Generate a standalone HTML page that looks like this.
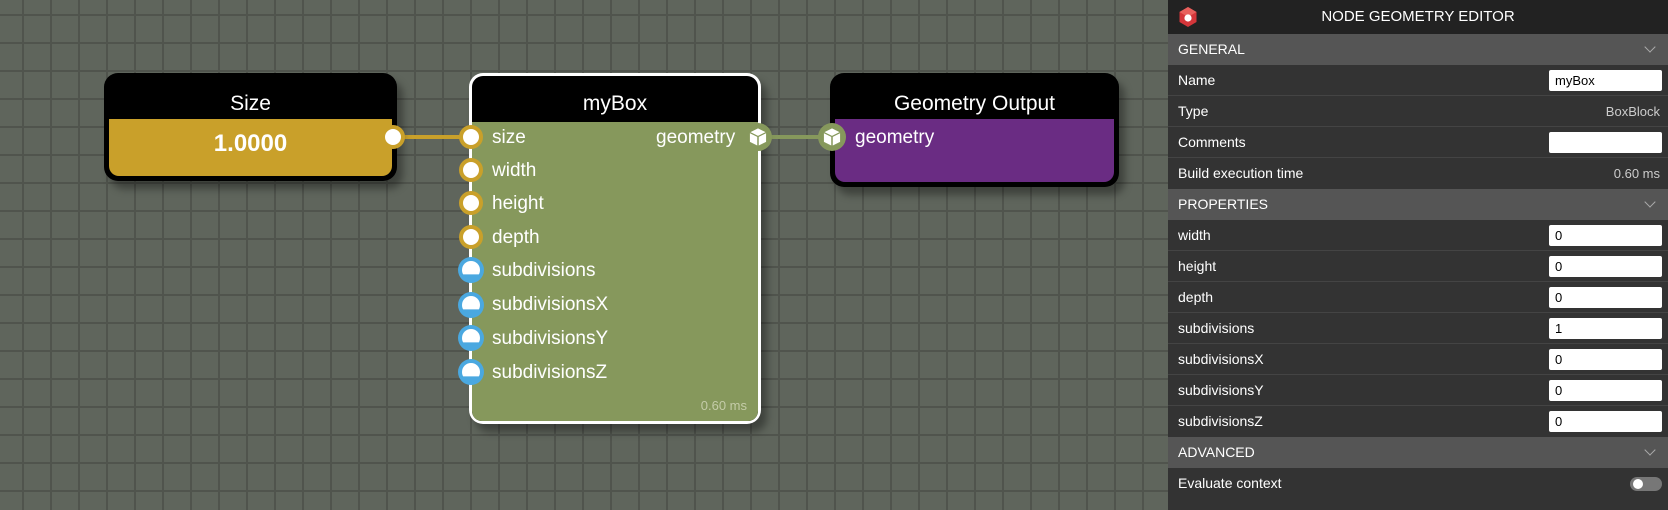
<!DOCTYPE html>
<html><head><meta charset="utf-8"><style>
*{box-sizing:border-box;margin:0;padding:0}
body{width:1668px;height:510px;overflow:hidden;position:relative;font-family:"Liberation Sans",Arial,sans-serif;
background-color:#5f655c;
background-image:linear-gradient(90deg,#50544d 2px,transparent 2px),linear-gradient(0deg,#50544d 2px,transparent 2px);
background-size:28px 28px;background-position:22px 16px;}
.node{position:absolute;border-radius:14px;background:#000;box-shadow:6px 8px 8px rgba(0,0,0,.35)}
.title{position:absolute;left:0;right:0;top:0;height:46px;line-height:56px;text-align:center;color:#fff;font-size:21px}
.t2{line-height:62px}
.body{position:absolute;left:5px;right:5px;top:46px;bottom:5px;border-radius:0 0 10px 10px}
.lbl{position:absolute;color:#fff;font-size:19px;line-height:20px}
.port{position:absolute;width:24px;height:24px;border-radius:50%;background:#fff;border:4px solid #c9a02a}
.bport{position:absolute;width:26px;height:26px;border-radius:50%;background:#4aa8e0;overflow:hidden}
.bport:after{content:"";position:absolute;left:4px;top:4px;width:18px;height:18px;border-radius:50%;background:#fff;clip-path:inset(0 0 26% 0)}
.link{position:absolute;height:4px}
.panel{position:absolute;left:1168px;top:0;width:500px;height:510px;background:#333}
.ph{height:34px;background:#222;color:#fff;text-align:center;line-height:34px;font-size:15px;position:relative}
.sec{height:31px;background:#555;color:#fff;font-size:14px;line-height:31px;padding-left:10px;position:relative}
.sec:after{content:"";position:absolute;right:14px;top:9px;width:7px;height:7px;border-right:1.5px solid #aaa;border-bottom:1.5px solid #aaa;transform:rotate(45deg)}
.row{height:31px;color:#fff;font-size:14px;line-height:31px;padding-left:10px;position:relative;border-bottom:1px solid #444}
.row .v{position:absolute;right:8px;top:0;color:#ccc;font-size:13px}
.row .in{position:absolute;right:6px;top:5px;width:113px;height:21px;background:#fff;border-radius:2px;color:#000;font-size:13px;line-height:21px;padding-left:6px}
</style></head><body>

<div class="link" style="left:393px;top:135px;width:80px;background:#c9a02a"></div>
<div class="link" style="left:758px;top:135px;width:76px;background:#86985c"></div>

<div class="node" style="left:104px;top:73px;width:293px;height:108px">
 <div class="title t2">Size</div>
 <div class="body" style="background:#c9a02a"><div style="color:#fff;font-weight:bold;font-size:24px;text-align:center;line-height:44px;margin-top:3px">1.0000</div></div>
</div>
<div class="port" style="left:381px;top:125px"></div>

<div class="node" style="left:469px;top:73px;width:292px;height:351px;background:#fff">
 <div class="body" style="left:3px;right:3px;top:3px;bottom:3px;background:#000;border-radius:11px 11px 10px 10px"></div>
 <div class="title" style="top:3px">myBox</div>
 <div class="body" style="left:3px;right:3px;top:49px;bottom:3px;background:#86985c"></div>
 <div class="lbl" style="right:14px;bottom:8px;font-size:13px;color:#c4cca8">0.60 ms</div>
</div>
<div class="lbl" style="left:492px;top:128px">size</div>
<div class="lbl" style="left:492px;top:161px">width</div>
<div class="lbl" style="left:492px;top:194px">height</div>
<div class="lbl" style="left:492px;top:228px">depth</div>
<div class="lbl" style="left:492px;top:261px">subdivisions</div>
<div class="lbl" style="left:492px;top:295px">subdivisionsX</div>
<div class="lbl" style="left:492px;top:329px">subdivisionsY</div>
<div class="lbl" style="left:492px;top:363px">subdivisionsZ</div>
<div class="lbl" style="left:656px;top:128px">geometry</div>
<div class="port" style="left:459px;top:125px"></div>
<div class="port" style="left:459px;top:158px"></div>
<div class="port" style="left:459px;top:191px"></div>
<div class="port" style="left:459px;top:225px"></div>
<div class="bport" style="left:458px;top:257px"></div>
<div class="bport" style="left:458px;top:292px"></div>
<div class="bport" style="left:458px;top:325px"></div>
<div class="bport" style="left:458px;top:359px"></div>

<div class="node" style="left:830px;top:73px;width:289px;height:114px">
 <div class="title t2">Geometry Output</div>
 <div class="body" style="background:#6a2c83"></div>
</div>
<div class="lbl" style="left:855px;top:128px">geometry</div>

<svg style="position:absolute;left:744px;top:123px" width="28" height="28" viewBox="0 0 26 26"><circle cx="13" cy="13" r="13" fill="#86985c"/><path d="M13 5l7 3.5-7 3.5-7-3.5z M5.5 9.5l6.8 3.4v8l-6.8-3.4z M20.5 9.5l-6.8 3.4v8l6.8-3.4z" fill="#fff"/></svg>
<svg style="position:absolute;left:818px;top:123px" width="28" height="28" viewBox="0 0 26 26"><circle cx="13" cy="13" r="13" fill="#86985c"/><path d="M13 5l7 3.5-7 3.5-7-3.5z M5.5 9.5l6.8 3.4v8l-6.8-3.4z M20.5 9.5l-6.8 3.4v8l6.8-3.4z" fill="#fff"/></svg>

<div class="panel">
 <div class="ph"><svg style="position:absolute;left:10px;top:6px" width="20" height="22" viewBox="0 0 20 22"><path d="M10 1l8.5 5v10L10 21 1.5 16V6z" fill="#d4363a"/><path d="M10 1l8.5 5-8.5 5-8.5-5z" fill="#e8605c"/><circle cx="10" cy="12" r="3.6" fill="#fff"/></svg>NODE GEOMETRY EDITOR</div>
 <div class="sec">GENERAL</div>
 <div class="row">Name<div class="in">myBox</div></div>
 <div class="row">Type<span class="v">BoxBlock</span></div>
 <div class="row">Comments<div class="in"></div></div>
 <div class="row" style="border:none">Build execution time<span class="v">0.60 ms</span></div>
 <div class="sec">PROPERTIES</div>
 <div class="row">width<div class="in">0</div></div>
 <div class="row">height<div class="in">0</div></div>
 <div class="row">depth<div class="in">0</div></div>
 <div class="row">subdivisions<div class="in">1</div></div>
 <div class="row">subdivisionsX<div class="in">0</div></div>
 <div class="row">subdivisionsY<div class="in">0</div></div>
 <div class="row" style="border:none">subdivisionsZ<div class="in">0</div></div>
 <div class="sec">ADVANCED</div>
 <div class="row" style="border:none">Evaluate context<div style="position:absolute;right:6px;top:9px;width:32px;height:14px;border-radius:7px;background:#777"><div style="position:absolute;left:3px;top:2px;width:10px;height:10px;border-radius:50%;background:#fff"></div></div></div>
</div>
</body></html>
